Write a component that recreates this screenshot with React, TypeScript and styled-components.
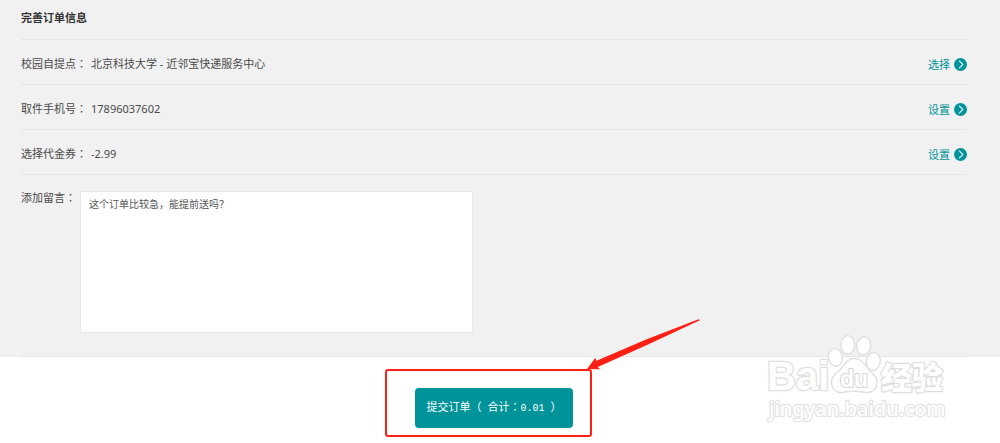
import React, { useState } from "react";
import styled, { createGlobalStyle } from "styled-components";

const TEAL = "#00939a";
const RED = "#ff2015";

const GlobalStyle = createGlobalStyle`
  * { box-sizing: border-box; }
  body {
    margin: 0;
    background: #fff;
    color: #4a4a4a;
    font: 11px/16px "Noto Sans", "Noto Sans CJK SC", sans-serif;
  }
`;

const Page = styled.main`
  width: 100%;
`;

const Details = styled.section`
  background: #f1f1f1;
  padding: 0 33px 0 21px;
`;

const Title = styled.h1`
  margin: 0;
  padding: 10px 0 13px;
  border-bottom: 1px solid #e6e6e6;
  color: #333;
  font-size: 11px;
  line-height: 16px;
  font-weight: 700;
`;

const Row = styled.div`
  display: flex;
  align-items: center;
  height: 45px;
  padding-top: 4px;
  border-bottom: 1px solid #e6e6e6;
`;

const Label = styled.span`
  flex: none;
`;

const Colon = styled.span`
  font-family: "Noto Sans CJK TC", sans-serif;
  line-height: 1;
`;

const Value = styled.span`
  flex: 1;
  margin-left: 4px;
`;

const Action = styled.a`
  display: flex;
  align-items: center;
  gap: 4px;
  color: ${TEAL};
  text-decoration: none;
`;

const ActionText = styled.span`
  padding-top: 2px;
`;

const MessageRow = styled.div`
  display: flex;
  align-items: flex-start;
  gap: 4px;
  padding: 15px 0 23px;
  border-bottom: 1px solid #e6e6e6;
`;

const MessageLabel = styled.label`
  flex: none;
`;

const Message = styled.textarea`
  display: block;
  flex: 0 1 393px;
  min-width: 0;
  height: 142px;
  margin: 1px 0 0;
  padding: 4px 8px;
  border: 1px solid #e8e8e8;
  background: #fff;
  color: #555;
  font: 10px/16px "Noto Sans CJK SC", sans-serif;
  resize: none;
  outline: none;
`;

const Footer = styled.footer`
  position: relative;
  display: flex;
  justify-content: center;
  padding: 31px 33px 15px 21px;
`;

const SubmitArea = styled.div`
  position: relative;
`;

const Submit = styled.button`
  display: block;
  height: 40px;
  padding: 0 11px;
  border: 0;
  border-radius: 4px;
  background: ${TEAL};
  color: #fff;
  font: 11px/16px "Liberation Mono", "Noto Sans CJK SC", monospace;
  white-space: pre;
  cursor: pointer;
`;

const Amount = styled.span`
  font-size: 10px;
`;

const Highlight = styled.div`
  position: absolute;
  inset: -19px -19px -9px -30px;
  border: 2px solid ${RED};
  border-radius: 3px;
  pointer-events: none;
`;

const Arrow = styled.svg`
  position: absolute;
  left: 171px;
  top: -71px;
  pointer-events: none;
`;

const Watermark = styled.svg`
  position: absolute;
  right: 50px;
  top: -27px;
  pointer-events: none;
`;

function ArrowIcon() {
  return (
    <svg width="13" height="13" viewBox="0 0 13 13" aria-hidden="true">
      <circle cx="6.5" cy="6.5" r="6.5" fill={TEAL} />
      <path d="M5 2.6 8.9 6.5 5 10.4" fill="none" stroke="#d9f0f1" strokeWidth="1.2" />
    </svg>
  );
}

const rows = [
  { label: "校园自提点", value: "北京科技大学 - 近邻宝快递服务中心", action: "选择" },
  { label: "取件手机号", value: "17896037602", action: "设置" },
  { label: "选择代金券", value: "-2.99", action: "设置" },
];

export default function App() {
  const [message, setMessage] = useState("这个订单比较急，能提前送吗？");
  return (
    <Page>
      <GlobalStyle />
      <Details>
        <Title>完善订单信息</Title>
        {rows.map((row) => (
          <Row key={row.label}>
            <Label>
              {row.label}
              <Colon>：</Colon>
            </Label>
            <Value>{row.value}</Value>
            <Action href="#">
              <ActionText>{row.action}</ActionText>
              <ArrowIcon />
            </Action>
          </Row>
        ))}
        <MessageRow>
          <MessageLabel htmlFor="message">
            添加留言<Colon>：</Colon>
          </MessageLabel>
          <Message id="message" value={message} onChange={(e) => setMessage(e.target.value)} />
        </MessageRow>
      </Details>
      <Footer>
        <SubmitArea>
          <Submit type="button">
            提交订单（<Amount> </Amount>合计<Colon>：</Colon>
            <Amount>0.01 </Amount>）
          </Submit>
          <Highlight />
          <Arrow width="116" height="54" viewBox="0 0 116 54" aria-hidden="true">
            <path
              d="M112.5 2.2 Q114.5 2.3 113.3 3.6 L62 27.6 11.8 50 14.3 52.3 1 52 9.3 40.7 10.5 43.8 60 22.6Z"
              fill={RED}
            />
          </Arrow>
        </SubmitArea>
        <Watermark width="186" height="94" viewBox="0 0 186 94" aria-hidden="true">
          <g fill="#fff" stroke="#dfdfdf" strokeWidth="1.4" strokeLinejoin="round">
            <g strokeWidth="2.6" paintOrder="stroke">
              <text x="3" y="60" fontSize="40" fontWeight="700" fontFamily="Liberation Sans, sans-serif">Bai</text>
              <text x="117" y="59" fontSize="31" fontWeight="900" fontFamily="Noto Sans CJK SC, sans-serif">经验</text>
            </g>
            <ellipse cx="71.3" cy="27.3" rx="7" ry="9" transform="rotate(-8 71.3 27.3)" />
            <ellipse cx="83.7" cy="15" rx="6.8" ry="9.3" />
            <ellipse cx="99.7" cy="16" rx="7" ry="9" transform="rotate(12 99.7 16)" />
            <ellipse cx="109.3" cy="31.5" rx="7" ry="9" transform="rotate(8 109.3 31.5)" />
            <path d="M90 28.5 C99 28.5 101 36 106 41 C112 46 114.5 50 112.5 56 C110 63 104 63 99 62 C93 61 87 61 81 62 C75 63.5 69 62 67.8 55 C66 48 71 44 76 40 C80 36 82 28.5 90 28.5Z" />
            <text x="76" y="57" fontSize="23" fontWeight="700" fontFamily="Liberation Sans, sans-serif" stroke="#d4d4d4" strokeWidth="2" paintOrder="stroke">du</text>
            <text x="5" y="86" fontSize="20" fontWeight="500" fontFamily="Noto Sans, sans-serif" stroke="#e4e4e4" strokeWidth="2.4" paintOrder="stroke">jingyan.baidu.com</text>
          </g>
        </Watermark>
      </Footer>
    </Page>
  );
}
